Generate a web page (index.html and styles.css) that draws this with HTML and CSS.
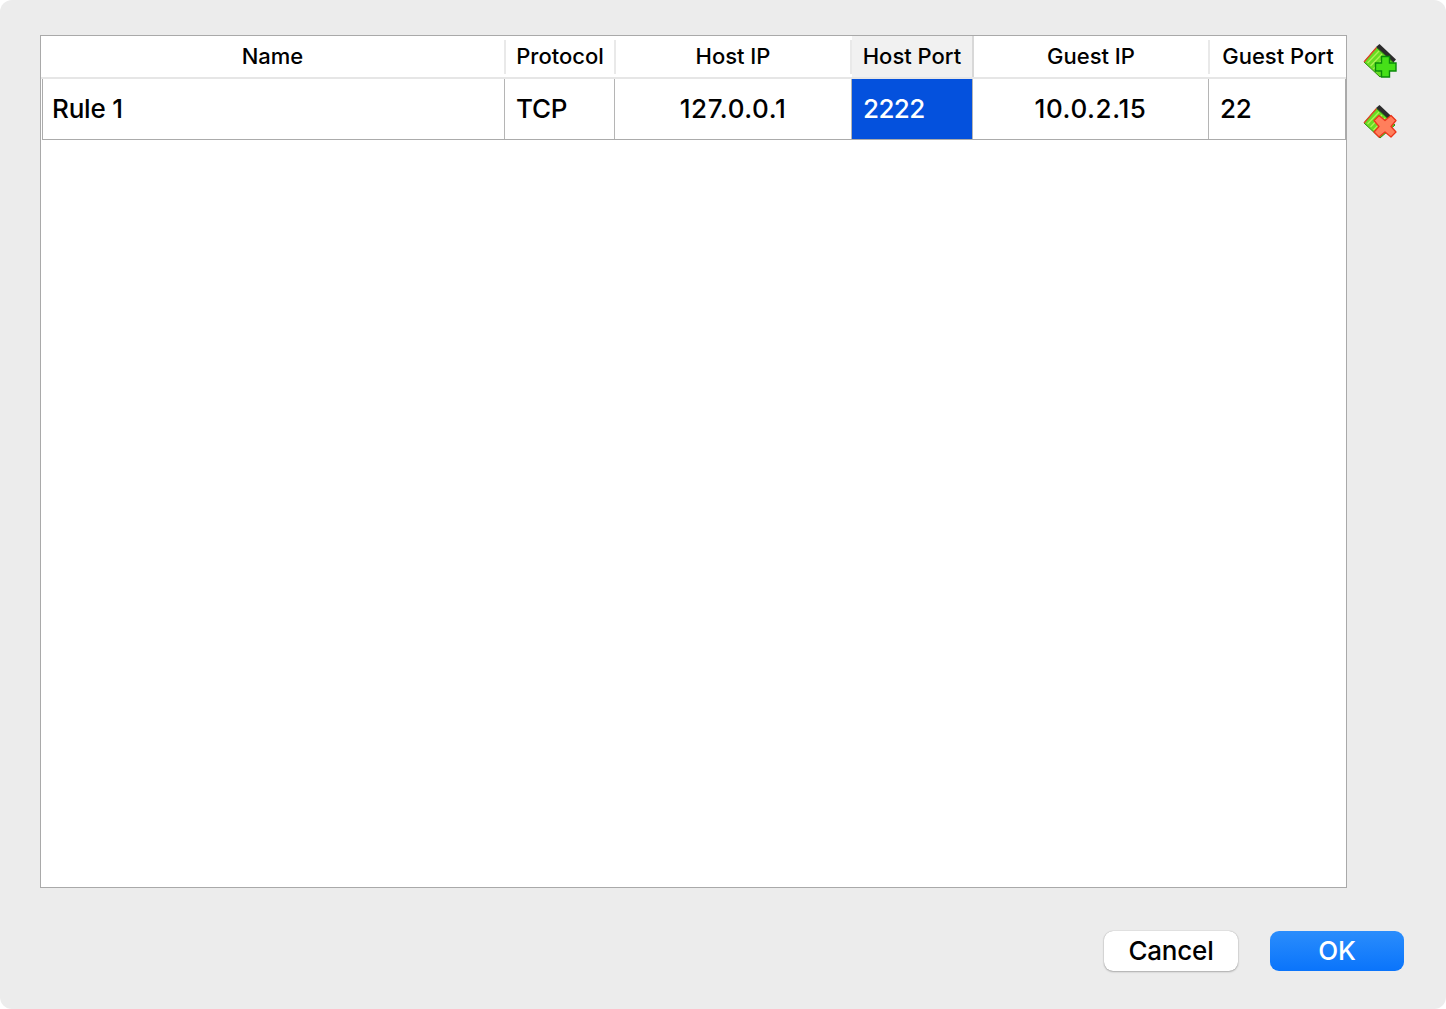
FILE: index.html
```html
<!DOCTYPE html>
<html lang="en">
<head>
<meta charset="utf-8">
<title>Port Forwarding Rules</title>
<link rel="stylesheet" href="styles.css">
</head>
<body>
<main class="dialog">
  <div class="content">
    <section class="table">
      <div class="grid head">
        <div class="hcell">Name</div>
        <div class="hcell">Protocol</div>
        <div class="hcell">Host IP</div>
        <div class="hcell active">Host Port</div>
        <div class="hcell">Guest IP</div>
        <div class="hcell last">Guest Port</div>
      </div>
      <div class="grid row">
        <div class="cell">Rule 1</div>
        <div class="cell">TCP</div>
        <div class="cell center">127.0.0.1</div>
        <div class="cell selected">2222</div>
        <div class="cell center">10.0.2.15</div>
        <div class="cell">22</div>
      </div>
    </section>
    <aside class="tools">
      <svg class="tool" viewBox="0 0 40 40" width="40" height="40" aria-label="Add rule">
        <polygon points="16,7 19.500,4 36,19.500 32,24" fill="#2b2b2b"/>
        <polygon points="4,22 16.500,7.500 35,24 20,37" fill="#66dd22" stroke="#2c8a10" stroke-width="1"/>
        <path d="M7.500 23 L19 11 M10.500 26 L22 14 M13.500 29 L25 17 M16.500 32 L28 20" stroke="#aef055" stroke-width="1.300"/>
        <path d="M4 22 L16.500 7.500" stroke="#e0442a" stroke-width="1.200"/>
        <path d="M21.500 16.500 H29.500 V23 H36 V31 H29.500 V37 H21.500 V31 H15.500 V23 H21.500 Z" fill="#46e018" stroke="#0a8a0a" stroke-width="1.400"/>
      </svg>
      <svg class="tool" viewBox="0 0 40 40" width="40" height="40" aria-label="Remove rule">
        <polygon points="16,7 19.500,4 36,19.500 32,24" fill="#2b2b2b"/>
        <polygon points="4,22 16.500,7.500 35,24 20,37" fill="#66dd22" stroke="#2c8a10" stroke-width="1"/>
        <path d="M7.500 23 L19 11 M10.500 26 L22 14 M13.500 29 L25 17" stroke="#aef055" stroke-width="1.300"/>
        <path d="M4 22 L16.500 7.500" stroke="#e0442a" stroke-width="1.200"/>
        <path d="M19 14.500 L25 19.500 L31 14.500 L36 19.500 L31 25.500 L36 31 L31 36 L25 31 L19 36 L14 31 L19 25.500 L14 19.500 Z" fill="#ff7f5c" stroke="#ec341a" stroke-width="1.300" stroke-linejoin="round"/>
      </svg>
    </aside>
  </div>
  <footer class="footer">
    <button class="btn" type="button">Cancel</button>
    <button class="btn primary" type="button">OK</button>
  </footer>
</main>
</body>
</html>
```

FILE: styles.css
```css
* {
  box-sizing: border-box;
}

html,
body {
  margin: 0;
  background: #fff;
}

.dialog {
  width: 1446px;
  height: 1009px;
  padding: 35px 42px 0 40px;
  background: #ececec;
  border-radius: 12px;
  font-family: Inter, "Liberation Sans", sans-serif;
  color: #000;
}

.content {
  display: flex;
  height: 853px;
}

.table {
  width: 1307px;
  height: 853px;
  background: #fff;
  border: 1px solid #a9a9a9;
}

.grid {
  display: grid;
  margin-left: 1px;
}

.head {
  height: 43px;
  border-bottom: 2px solid #e6e6e6;
  margin-left: 0;
  width: 1305px;
  grid-template-columns: 465px 110px 236px 122px 236px 136px;
}

.hcell {
  display: flex;
  align-items: center;
  justify-content: center;
  margin: 4px 0 3px;
  padding-bottom: 2px;
  font-size: 22px;
  font-weight: 450;
  border-right: 2px solid #e9e9e9;
}

.hcell.last {
  border-right: 0;
}

.hcell.active {
  margin: 0;
  padding-bottom: 1px;
  background: #f1f1f1;
  border-right: 2px solid #d8d8d8;
}

.row {
  height: 61px;
  grid-template-columns: 462px 110px 237px 121px 236px 136px;
  border-left: 1px solid #ababab;
  border-bottom: 1px solid #ababab;
  border-right: 1px solid #ababab;
  width: 1304px;
}

.cell {
  display: flex;
  align-items: center;
  padding: 0 0 2px 11px;
  font-size: 26px;
  font-weight: 450;
  letter-spacing: -0.2px;
  border-right: 1px solid #b5b5b5;
}

.cell:first-child {
  padding-left: 9px;
}

.cell:last-child {
  border-right: 0;
}

.cell.center {
  justify-content: center;
  padding-left: 0;
  letter-spacing: 0.6px;
}

.cell.selected {
  padding-left: 11px;
  letter-spacing: -0.6px;
  background: #0451dd;
  color: #fff;
}

.tools {
  display: flex;
  flex-direction: column;
  gap: 21px;
  padding: 5px 0 0 13px;
}

.tool {
  display: block;
}

.footer {
  display: flex;
  justify-content: flex-end;
  gap: 32px;
  margin-top: 43px;
}

.btn {
  width: 134px;
  height: 40px;
  padding: 0 0 2px;
  border: 0;
  border-radius: 9px;
  background: #fff;
  box-shadow: 0 0 1px rgba(0, 0, 0, 0.35), 0 1px 2px rgba(0, 0, 0, 0.25);
  font: inherit;
  font-size: 26px;
  font-weight: 450;
  letter-spacing: -0.2px;
  color: #000;
}

.btn.primary {
  background: linear-gradient(#2a8dfc, #0a74fb);
  box-shadow: none;
  color: #fff;
}
```
